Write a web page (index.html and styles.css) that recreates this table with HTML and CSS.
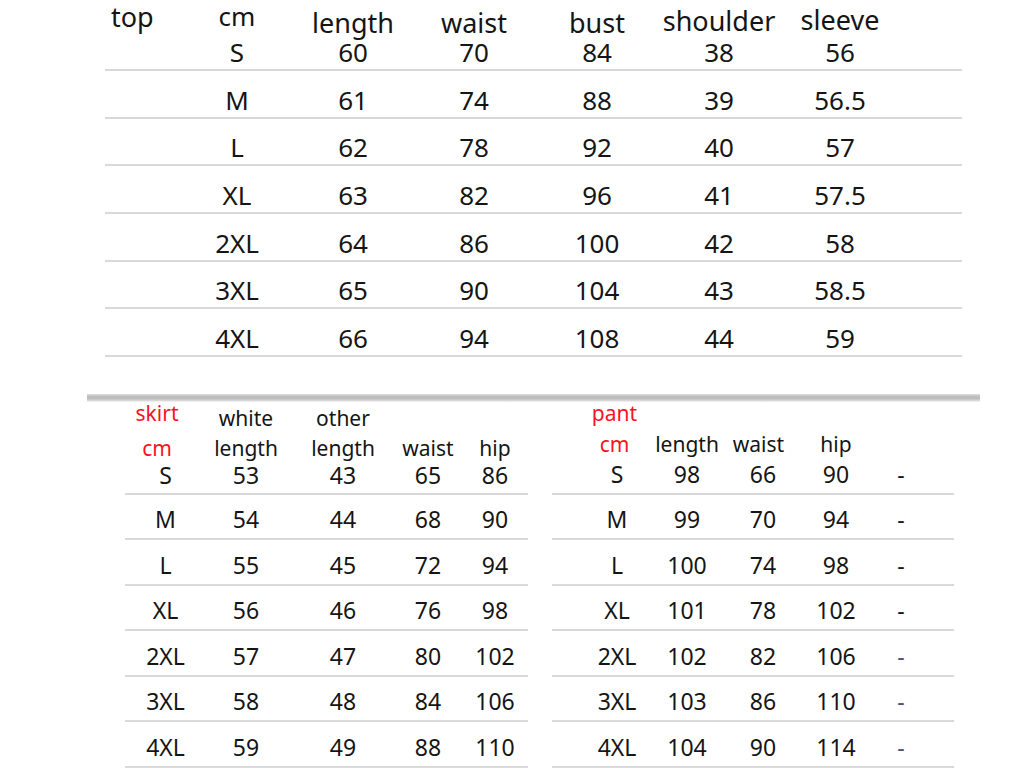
FILE: index.html
```html
<!DOCTYPE html>
<html lang="en">
<head>
<meta charset="utf-8">
<title>Size chart</title>
<link rel="stylesheet" href="styles.css">
</head>
<body>
<div class="page">
  <section class="top">
    <div class="tgrid thead">
      <span class="lbl">top</span>
      <span class="h-cm">cm</span>
      <span class="h-low">length</span>
      <span class="h-low">waist</span>
      <span class="h-low">bust</span>
      <span class="h-mid">shoulder</span>
      <span class="h-hi">sleeve</span>
    </div>
    <div class="tgrid trow first"><span></span><span>S</span><span>60</span><span>70</span><span>84</span><span>38</span><span>56</span></div>
    <div class="tgrid trow"><span></span><span>M</span><span>61</span><span>74</span><span>88</span><span>39</span><span>56.5</span></div>
    <div class="tgrid trow"><span></span><span>L</span><span>62</span><span>78</span><span>92</span><span>40</span><span>57</span></div>
    <div class="tgrid trow"><span></span><span>XL</span><span>63</span><span>82</span><span>96</span><span>41</span><span>57.5</span></div>
    <div class="tgrid trow"><span></span><span>2XL</span><span>64</span><span>86</span><span>100</span><span>42</span><span>58</span></div>
    <div class="tgrid trow"><span></span><span>3XL</span><span>65</span><span>90</span><span>104</span><span>43</span><span>58.5</span></div>
    <div class="tgrid trow"><span></span><span>4XL</span><span>66</span><span>94</span><span>108</span><span>44</span><span>59</span></div>
  </section>

  <div class="shadow"></div>

  <div class="bottom">
    <section class="skirt">
      <div class="sgrid bhead sk-h1">
        <span class="red sk-lbl">skirt</span>
        <span class="sk-sub">white</span>
        <span class="sk-sub">other</span>
        <span></span><span></span>
      </div>
      <div class="sgrid bhead sk-h2">
        <span class="red sk-lbl">cm</span>
        <span>length</span>
        <span>length</span>
        <span>waist</span>
        <span class="sk-hip">hip</span>
      </div>
      <div class="sgrid brow sk-first"><span>S</span><span>53</span><span>43</span><span>65</span><span class="sk-hip">86</span></div>
      <div class="sgrid brow"><span>M</span><span>54</span><span>44</span><span>68</span><span class="sk-hip">90</span></div>
      <div class="sgrid brow"><span>L</span><span>55</span><span>45</span><span>72</span><span class="sk-hip">94</span></div>
      <div class="sgrid brow"><span>XL</span><span>56</span><span>46</span><span>76</span><span class="sk-hip">98</span></div>
      <div class="sgrid brow"><span>2XL</span><span>57</span><span>47</span><span>80</span><span class="sk-hip">102</span></div>
      <div class="sgrid brow"><span>3XL</span><span>58</span><span>48</span><span>84</span><span class="sk-hip">106</span></div>
      <div class="sgrid brow"><span>4XL</span><span>59</span><span>49</span><span>88</span><span class="sk-hip">110</span></div>
    </section>

    <section class="pant">
      <div class="pgrid bhead pt-h1">
        <span class="red pt-lbl">pant</span>
      </div>
      <div class="pgrid bhead pt-h2">
        <span class="red pt-lbl">cm</span>
        <span>length</span>
        <span class="pt-waist">waist</span>
        <span>hip</span>
      </div>
      <div class="pgrid brow pt-first"><span>S</span><span>98</span><span>66</span><span>90</span><span class="dash">-</span></div>
      <div class="pgrid brow"><span>M</span><span>99</span><span>70</span><span>94</span><span class="dash">-</span></div>
      <div class="pgrid brow"><span>L</span><span>100</span><span>74</span><span>98</span><span class="dash">-</span></div>
      <div class="pgrid brow"><span>XL</span><span>101</span><span>78</span><span>102</span><span class="dash">-</span></div>
      <div class="pgrid brow"><span>2XL</span><span>102</span><span>82</span><span>106</span><span class="dash muted">-</span></div>
      <div class="pgrid brow"><span>3XL</span><span>103</span><span>86</span><span>110</span><span class="dash muted">-</span></div>
      <div class="pgrid brow"><span>4XL</span><span>104</span><span>90</span><span>114</span><span class="dash muted">-</span></div>
    </section>
  </div>
</div>
</body>
</html>
```

FILE: styles.css
```css
html, body {
  margin: 0;
  padding: 0;
  background: #ffffff;
  overflow: hidden;
}

body {
  font-family: "Noto Sans", "Open Sans", sans-serif;
  color: #151515;
}

.page {
  width: 1024px;
  height: 768px;
}

/* ---------- top table ---------- */
.top {
  margin-left: 105px;
  width: 857px;
}

.tgrid {
  display: grid;
  grid-template-columns: 75px 114px 118px 124px 122px 122px 120px 62px;
}

.tgrid span {
  text-align: center;
  white-space: nowrap;
}

.thead {
  height: 36px;
  font-size: 27px;
  line-height: 27px;
  align-items: start;
}

.thead .lbl {
  text-align: left;
  padding-left: 6px;
  margin-top: 3px;
}

.thead .h-cm {
  font-size: 26px;
  margin-top: 3px;
}

.thead .h-low {
  margin-top: 9px;
}

.thead .h-mid {
  margin-top: 7px;
}

.thead .h-hi {
  margin-top: 6px;
}

.trow {
  box-sizing: border-box;
  height: 47.67px;
  border-bottom: 2px solid #d9d9d9;
  align-items: end;
  padding-bottom: 4px;
  font-size: 26px;
  line-height: 26px;
}

.trow.first {
  height: 35px;
}

/* ---------- divider shadow ---------- */
.shadow {
  margin: 37px 0 0 87px;
  width: 893px;
  height: 8px;
  background: linear-gradient(to bottom, #e4e4e4 0%, #c0c0c0 25%, #bbbbbb 55%, #d6d6d6 80%, #f8f8f8 100%);
}

/* ---------- bottom tables ---------- */
.bottom {
  display: flex;
}

.skirt {
  margin-left: 125px;
  width: 403px;
}

.pant {
  margin-left: 24px;
  width: 402px;
}

.sgrid {
  display: grid;
  grid-template-columns: 81px 80px 114px 56px 72px;
}

.pgrid {
  display: grid;
  box-sizing: border-box;
  padding-left: 30px;
  grid-template-columns: 70px 70px 82px 64px 66px;
}

.sgrid span,
.pgrid span {
  text-align: center;
  white-space: nowrap;
}

.bhead {
  font-size: 21px;
  line-height: 22px;
  align-items: start;
}

.red {
  color: #f5141e;
}

.sk-h1 {
  height: 35px;
}

.sk-h1 .sk-sub {
  margin-top: 5px;
}

.sk-h2 {
  height: 27px;
}

.sk-lbl {
  padding-right: 17px;
}

.sk-hip {
  padding-left: 6px;
}

.pt-h1 {
  height: 31px;
}

.pt-h2 {
  height: 30px;
}

.pt-lbl {
  padding-right: 5px;
}

.pt-waist {
  padding-right: 9px;
}

.brow {
  box-sizing: border-box;
  height: 45.5px;
  border-bottom: 2px solid #d9d9d9;
  align-items: end;
  padding-bottom: 8px;
  font-size: 23px;
  line-height: 22px;
}

.sk-first {
  height: 31px;
}

.pt-first {
  height: 32px;
}

.dash {
  color: #1a1a1a;
}

.dash.muted {
  color: #4b5474;
}
```
